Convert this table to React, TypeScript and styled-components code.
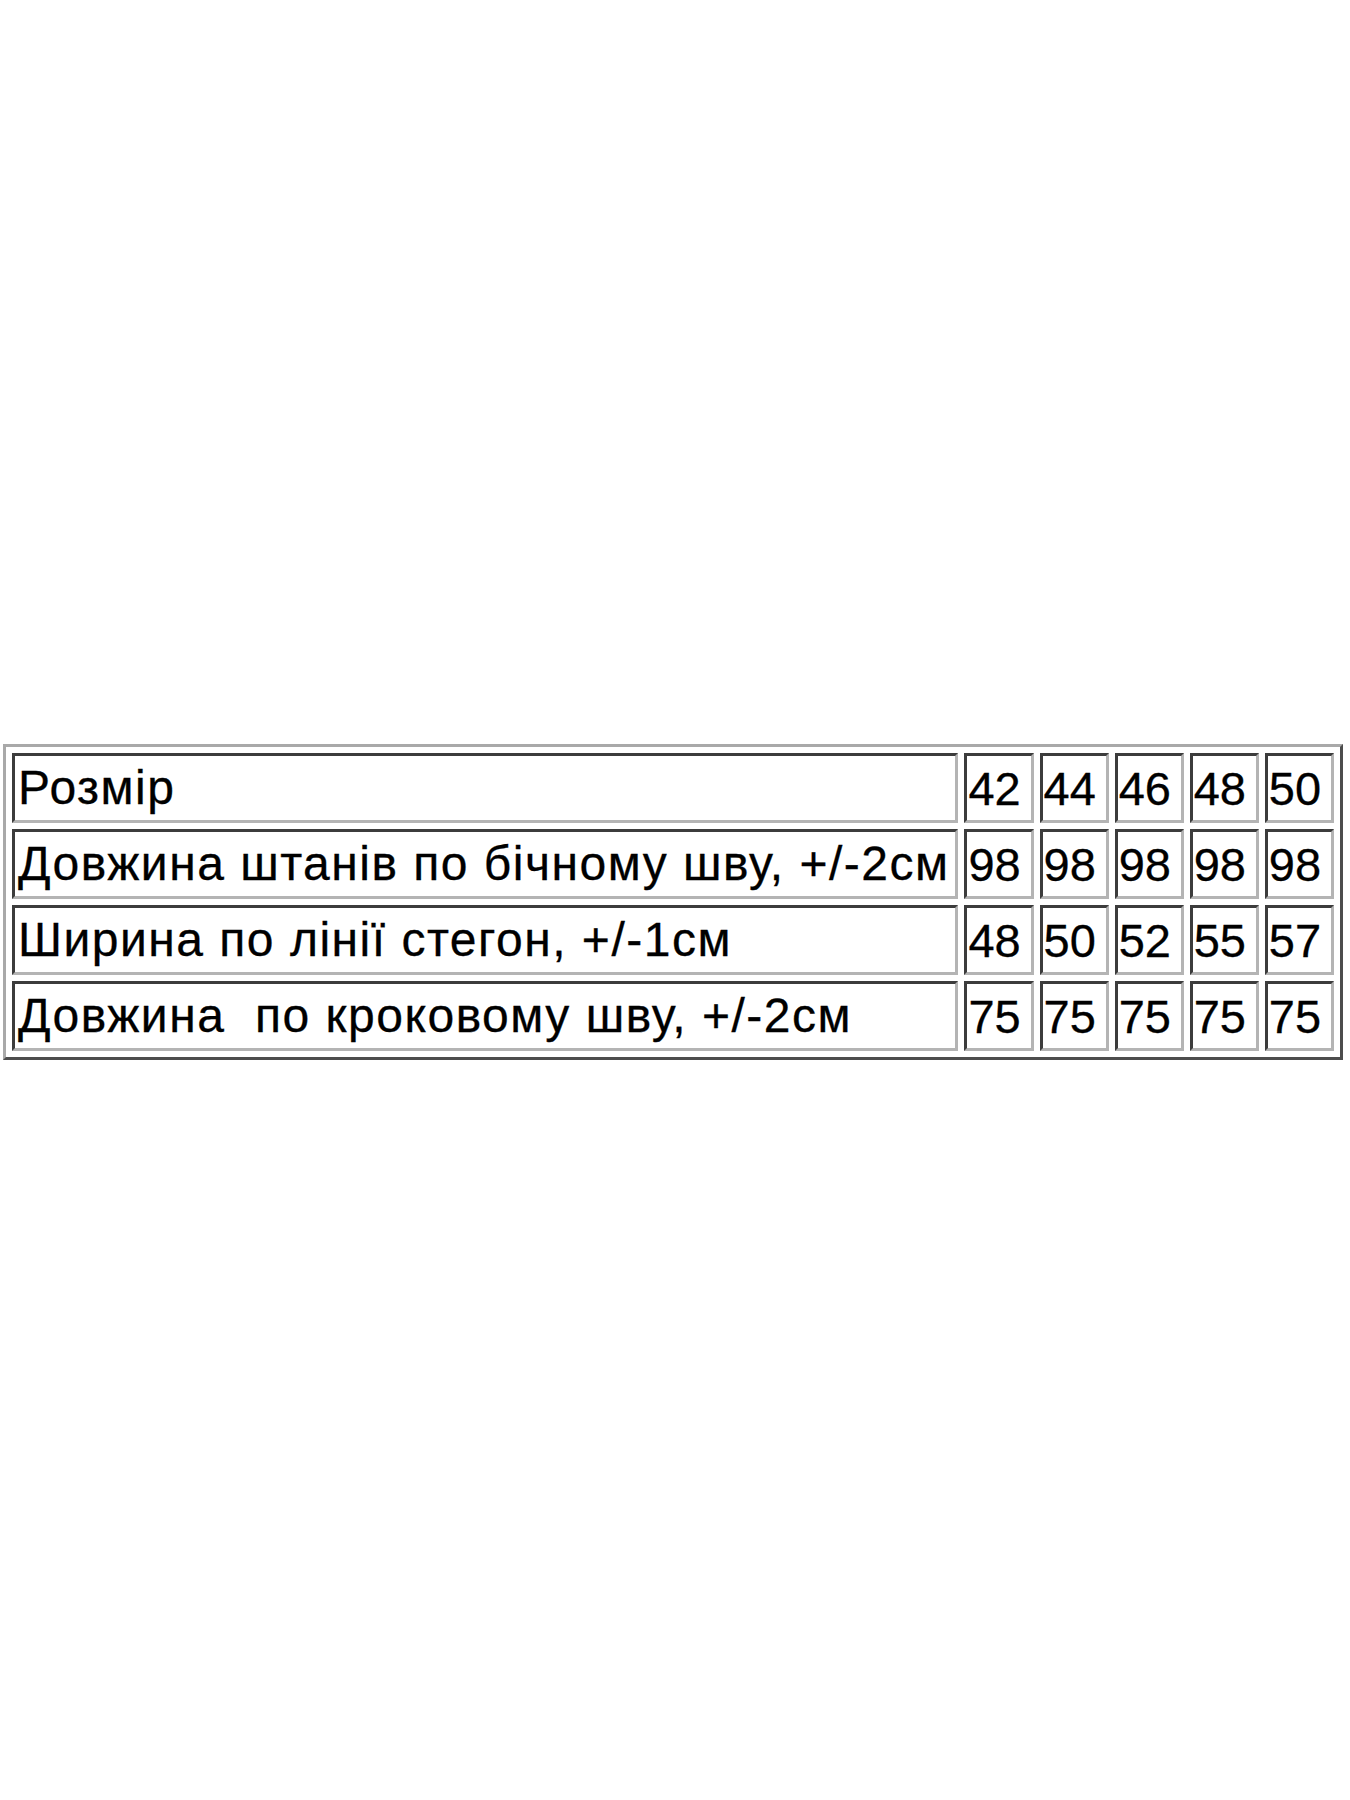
import { FC } from "react";
import styled, { createGlobalStyle } from "styled-components";

interface SizeRow {
  label: string;
  values: Array<string>;
}

const rows: Array<SizeRow> = [
  { label: "Розмір", values: ["42", "44", "46", "48", "50"] },
  {
    label: "Довжина штанів по бічному шву, +/-2см",
    values: ["98", "98", "98", "98", "98"],
  },
  {
    label: "Ширина по лінії стегон, +/-1см",
    values: ["48", "50", "52", "55", "57"],
  },
  {
    label: "Довжина  по кроковому шву, +/-2см",
    values: ["75", "75", "75", "75", "75"],
  },
];

const App: FC = () => {
  return (
    <>
      <GlobalStyle />
      <StyledPage>
        <StyledTable>
          <colgroup>
            <col style={{ width: 945 }} />
            {rows[0].values.map((_, i) => (
              <col key={i} style={{ width: 69 }} />
            ))}
          </colgroup>
          <tbody>
            {rows.map((row) => (
              <tr key={row.label}>
                <StyledCell>{row.label}</StyledCell>
                {row.values.map((value, i) => (
                  <StyledCell key={i} $numeric>
                    {value}
                  </StyledCell>
                ))}
              </tr>
            ))}
          </tbody>
        </StyledTable>
      </StyledPage>
    </>
  );
};

const GlobalStyle = createGlobalStyle`
  html, body {
    margin: 0;
    padding: 0;
    background: #ffffff;
  }
  body {
    font-family: "Liberation Sans", Arial, sans-serif;
  }
`;

const StyledPage = styled.div`
  width: 1350px;
  min-height: 1800px;
  padding: 744px 0 0 3px;
  box-sizing: border-box;
`;

const StyledTable = styled.table`
  width: 1340px;
  table-layout: fixed;
  border-collapse: separate;
  border-spacing: 6px;
  border-style: solid;
  border-width: 3px;
  border-color: #a9a9a9 #4d4d4d #4d4d4d #a9a9a9;
`;

const StyledCell = styled.td<{ $numeric?: boolean }>`
  height: 64px;
  padding: 0 ${(p) => (p.$numeric ? "1px" : "3px")};
  border-style: solid;
  border-width: 3px;
  border-color: #3c3c3c #b4b4b4 #b4b4b4 #3c3c3c;
  font-size: ${(p) => (p.$numeric ? "47px" : "48px")};
  letter-spacing: ${(p) => (p.$numeric ? "0" : "1.5px")};
  line-height: 1;
  color: #000000;
  -webkit-text-stroke: 0.3px #000000;
  white-space: pre;
  overflow: hidden;
  vertical-align: middle;
  text-align: left;
`;

export default App;
